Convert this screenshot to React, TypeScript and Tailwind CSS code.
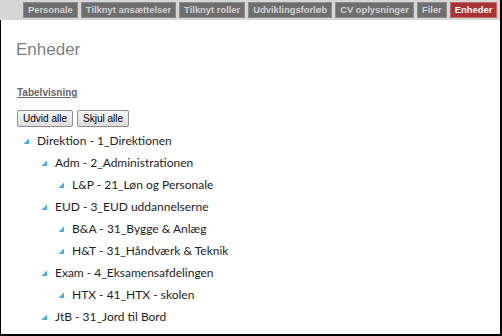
import React from "react";

type Unit = {
  label: string;
  level: number;
};

const tabs = [
  "Personale",
  "Tilknyt ansættelser",
  "Tilknyt roller",
  "Udviklingsforløb",
  "CV oplysninger",
  "Filer",
  "Enheder",
  "Adm",
];

const units: Unit[] = [
  { label: "Direktion - 1_Direktionen", level: 0 },
  { label: "Adm - 2_Administrationen", level: 1 },
  { label: "L&P - 21_Løn og Personale", level: 2 },
  { label: "EUD - 3_EUD uddannelserne", level: 1 },
  { label: "B&A - 31_Bygge & Anlæg", level: 2 },
  { label: "H&T - 31_Håndværk & Teknik", level: 2 },
  { label: "Exam - 4_Eksamensafdelingen", level: 1 },
  { label: "HTX - 41_HTX - skolen", level: 2 },
  { label: "JtB - 31_Jord til Bord", level: 1 },
];

const indent = ["pl-[22px]", "pl-[40px]", "pl-[57px]"];

function Arrow() {
  return (
    <svg width="6" height="6" viewBox="0 0 6 6" className="shrink-0">
      <path d="M6 0.5 L6 6 L0.5 6 Z" fill="#45aee6" />
    </svg>
  );
}

export default function App() {
  return (
    <div className="w-[502px] h-[336px] overflow-hidden bg-white flex flex-col border-r-2 border-black font-['Liberation_Sans',Arial,sans-serif]">
      <div className="h-[20px] shrink-0 bg-[#d6d6d6] flex items-start gap-[3px] pl-[23px] pt-[2px] overflow-hidden whitespace-nowrap">
        {tabs.map((t) =>
          t === "Enheder" ? (
            <div
              key={t}
              className="h-[16px] px-[4px] flex items-center bg-[#a83236] border border-[#c06a6a] text-white text-[9.4px] font-bold"
            >
              {t}
            </div>
          ) : (
            <div
              key={t}
              className="h-[16px] px-[4px] flex items-center bg-[#6e6e6e] border border-[#8c8c8c] text-[#d2d2d2] text-[9.4px] font-bold"
            >
              {t}
            </div>
          )
        )}
      </div>

      <div className="flex-1 border-l border-b-2 border-black flex flex-col">
        <h1 className="mt-[20px] ml-[15px] text-[17px] leading-[20px] text-[#808080]">
          Enheder
        </h1>

        <a className="mt-[26px] ml-[16px] text-[10px] leading-[13px] font-bold text-[#666] underline w-fit">
          Tabelvisning
        </a>

        <div className="mt-[11px] ml-[16px] flex gap-[4px]">
          <button className="h-[17px] w-[56px] text-[10px] text-black border border-[#8e8e8e] rounded-[2px] bg-gradient-to-b from-[#f6f6f6] to-[#dcdcdc] leading-none">
            Udvid alle
          </button>
          <button className="h-[17px] w-[52px] text-[10px] text-black border border-[#8e8e8e] rounded-[2px] bg-gradient-to-b from-[#f6f6f6] to-[#dcdcdc] leading-none">
            Skjul alle
          </button>
        </div>

        <ul className="mt-[3px] font-['Lato',sans-serif] text-[12px] text-[#1e1e1e]">
          {units.map((u) => (
            <li
              key={u.label}
              className={`h-[22px] flex items-center gap-[8px] ${indent[u.level]}`}
            >
              <Arrow />
              <span>{u.label}</span>
            </li>
          ))}
        </ul>
      </div>
    </div>
  );
}
